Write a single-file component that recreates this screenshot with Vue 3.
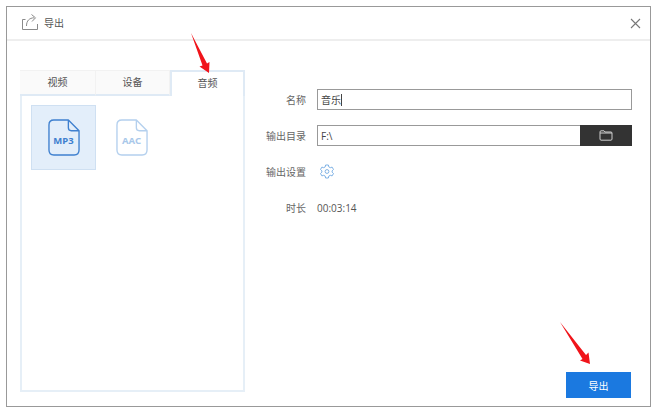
<template>
  <div class="page">
    <div class="window">
      <header class="head">
        <svg class="logo" width="18" height="18" viewBox="0 0 18 18" fill="none" stroke="#8a8a8a" stroke-width="1">
          <path d="M4.5 6.5H1.5V16.5H16.5V11" />
          <path d="M5.5 13C5.5 7.5 8.5 5 13 4.8" />
          <path d="M10.5 1.5L14.5 4.8L11 8.5" />
        </svg>
        <span class="title">导出</span>
        <svg class="close" width="11" height="11" viewBox="0 0 11 11" stroke="#777" stroke-width="1.1">
          <path d="M1 1L10 10M10 1L1 10" />
        </svg>
      </header>
      <main class="body">
        <section class="panel">
          <div class="tabs">
            <div v-for="t in tabs" :key="t.name" class="tab" :class="{ active: t.name === '音频' }" :style="{ width: t.width + 'px' }">{{ t.name }}</div>
          </div>
          <div class="formats">
            <div v-for="f in formats" :key="f.name" class="format" :class="{ selected: f.selected }">
              <div class="file" :class="{ dim: !f.selected }">
                <svg width="32" height="37" viewBox="0 0 33 38" fill="none" stroke-width="1.4" stroke-linejoin="round">
                  <path d="M21 1H6C3 1 1 3 1 6V32C1 35 3 37 6 37H27C30 37 32 35 32 32V12L21 1Z" />
                  <path d="M21 1V9C21 11 22 12 24 12H32" />
                </svg>
                <span class="label">{{ f.name }}</span>
              </div>
            </div>
          </div>
        </section>
        <section class="side">
          <div class="form">
            <div class="row">
              <span class="key">名称</span>
              <div class="field"><span>音乐</span><i class="caret"></i></div>
            </div>
            <div class="row">
              <span class="key">输出目录</span>
              <div class="field path">
                <span class="pathtext">F:\</span>
                <div class="browse">
                  <svg width="14" height="11" viewBox="0 0 14 11" fill="none" stroke="#cfcfcf" stroke-width="1">
                    <path d="M1 3V2C1 1.2 1.4 .8 2 .8H5L6 2H12C12.6 2 13 2.4 13 3V9C13 9.7 12.6 10.2 12 10.2H2C1.4 10.2 1 9.7 1 9V3H13" />
                  </svg>
                </div>
              </div>
            </div>
            <div class="row">
              <span class="key">输出设置</span>
              <svg class="gear" width="14" height="15" viewBox="0 0 14 15" fill="none" stroke="#7fb2e5" stroke-width="1">
                <path d="M5.6 1H8.4L8.8 2.9L10.3 3.7L12.1 3.1L13.5 5.5L12.1 6.8V8.2L13.5 9.5L12.1 11.9L10.3 11.3L8.8 12.1L8.4 14H5.6L5.2 12.1L3.7 11.3L1.9 11.9L.5 9.5L1.9 8.2V6.8L.5 5.5L1.9 3.1L3.7 3.7L5.2 2.9Z" />
                <circle cx="7" cy="7.5" r="1.9" />
              </svg>
            </div>
            <div class="row">
              <span class="key">时长</span>
              <span class="value">00:03:14</span>
            </div>
          </div>
          <button class="export">导出</button>
        </section>
      </main>
    </div>
    <svg class="arrow one" width="30" height="50" viewBox="0 0 30 50">
      <path d="M1 0L17 30.5L19.5 29L19 40L9.5 33.5L12.5 32.5Z" fill="#f0141a" />
    </svg>
    <svg class="arrow two" width="40" height="52" viewBox="0 0 40 52">
      <path d="M1 1L27 34L29.5 31.5L31 43L21 39.5L23.5 38Z" fill="#f0141a" />
    </svg>
  </div>
</template>

<script setup>
const tabs = [
  { name: '视频', width: 76 },
  { name: '设备', width: 74 },
  { name: '音频', width: 75 }
]
const formats = [
  { name: 'MP3', selected: true },
  { name: 'AAC', selected: false }
]
</script>

<style>
html, body { margin: 0; background: #fff; }
</style>

<style scoped>
.page {
  position: relative;
  width: 662px;
  height: 414px;
  padding: 6px 11px 7px 6px;
  box-sizing: border-box;
  background: #fff;
  font-family: "Noto Sans CJK SC", "Liberation Sans", sans-serif;
  font-size: 10px;
  color: #555;
  overflow: hidden;
}
.window {
  height: 100%;
  border: 1px solid #999;
  box-sizing: border-box;
  display: flex;
  flex-direction: column;
}
.head {
  height: 32px;
  flex: none;
  display: flex;
  align-items: center;
  padding: 0 8px 0 14px;
  border-bottom: 2px solid #eeeeee;
}
.logo { margin-top: -2px; }
.title { margin-left: 5px; color: #555; margin-top: -1px; }
.close { margin-left: auto; margin-right: 1px; }
.body {
  flex: 1;
  display: flex;
  padding: 29px 18px 7px 13px;
  min-height: 0;
}
.panel {
  width: 225px;
  flex: none;
  display: flex;
  flex-direction: column;
  box-sizing: border-box;
  height: 322px;
  border: solid #e6eff7;
  border-width: 0 2px 2px 2px;
}
.tabs {
  display: flex;
  height: 26px;
  margin: 0 -2px;
  flex: none;
}
.tab {
  flex: none;
  display: flex;
  align-items: center;
  justify-content: center;
  padding-bottom: 2px;
  background: #fafafa;
  border-bottom: 2px solid #dfeaf5;
  border-top: 1px solid #f2f2f2;
  border-right: 1px solid #f2f2f2;
  box-sizing: border-box;
}
.tab.active {
  background: #fff;
  border: 2px solid #dfeaf5;
  border-bottom: none;
  padding-bottom: 4px;
}
.formats {
  display: flex;
  padding: 9px 9px;
}
.format {
  width: 65px;
  height: 65px;
  box-sizing: border-box;
  display: flex;
  align-items: center;
  justify-content: center;
}
.format.selected {
  background: #e3eefa;
  border: 1px solid #cfe0f2;
}
.format + .format { margin-left: 3px; }
.file {
  position: relative;
  width: 32px;
  height: 37px;
  stroke: #3f80cf;
  color: #3f80cf;
}
.file.dim { stroke: #b4d0ee; color: #a9c8ea; }
.file svg { display: block; }
.label {
  position: absolute;
  left: 0;
  right: 0;
  top: 15px;
  text-align: center;
  font-family: "Noto Sans", "Liberation Sans", sans-serif;
  font-size: 9.5px;
  line-height: 14px;
  font-weight: 700;
}
.side {
  flex: 1;
  display: flex;
  flex-direction: column;
  min-width: 0;
}
.form {
  display: flex;
  flex-direction: column;
  padding: 19px 0 0 0;
}
.row {
  display: flex;
  align-items: center;
  height: 21px;
  margin-bottom: 15px;
}
.key {
  width: 61px;
  margin-right: 11px;
  text-align: right;
  color: #666;
  flex: none;
}
.field {
  flex: 1;
  height: 21px;
  box-sizing: border-box;
  border: 1px solid #999;
  display: flex;
  align-items: center;
  padding-left: 3px;
  color: #444;
}
.caret {
  width: 1px;
  height: 12px;
  background: #444;
}
.path { padding-right: 0; }
.pathtext { flex: 1; font-family: "Open Sans", "Liberation Sans", sans-serif; }
.browse {
  width: 52px;
  height: 21px;
  margin: -1px -1px -1px 0;
  background: #333;
  display: flex;
  align-items: center;
  justify-content: center;
}
.gear { margin-left: 3px; }
.value { font-family: "Open Sans", "Liberation Sans", sans-serif; color: #555; }
.export {
  align-self: flex-end;
  margin-top: auto;
  margin-bottom: 1px;
  margin-right: 1px;
  width: 65px;
  height: 26px;
  border: none;
  padding: 0;
  background: #1b79e0;
  color: #fff;
  font: inherit;
}
.arrow { position: absolute; }
.one { left: 190px; top: 33px; }
.two { left: 559px; top: 321px; }
</style>
